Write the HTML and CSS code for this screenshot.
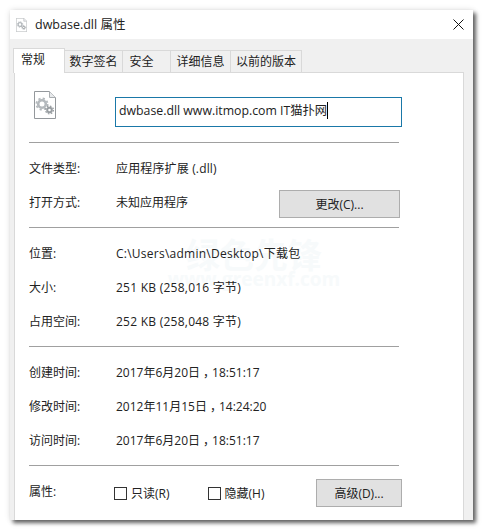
FILE: index.html
```html
<!doctype html>
<html lang="zh-CN">
<head>
	<meta charset="UTF-8">
	<title>dwbase.dll 属性</title>
	<link rel="stylesheet" href="styles.css">
</head>
<body>
	<svg class="defs" width="0" height="0">
		<symbol id="dll" viewBox="0 0 22 28">
			<path d="M.5.5H15.5L21.500 6.500V27.500H.5Z" fill="#fff" stroke="#94989c"/>
			<path d="M15.500.5V6.500H21.500" fill="#e8eaec" stroke="#a9adb0"/>
			<circle cx="8" cy="13" r="3.800" fill="none" stroke="#b4b9bd" stroke-width="2.600"/>
			<circle cx="8" cy="13" r="5.600" fill="none" stroke="#b4b9bd" stroke-width="1.800" stroke-dasharray="2.200 2.200"/>
			<circle cx="15.500" cy="19" r="2.300" fill="none" stroke="#999ea2" stroke-width="2"/>
			<circle cx="15.500" cy="19" r="3.900" fill="none" stroke="#999ea2" stroke-width="1.300" stroke-dasharray="1.600 1.450"/>
		</symbol>
	</svg>
	<div class="dialog">
		<div class="titlebar">
			<svg class="title-icon" width="11" height="14"><use href="#dll"/></svg>
			<span class="title-text">dwbase.dll 属性</span>
			<svg class="close" width="11" height="11" viewBox="0 0 11 11"><path d="M.5.5L10.500 10.500M10.500.5L.5 10.500" stroke="#111" fill="none"/></svg>
		</div>
		<div class="body">
			<ul class="tabs">
				<li class="tab tab-active">常规</li>
				<li class="tab tab-sign">数字签名</li>
				<li class="tab tab-safe">安全</li>
				<li class="tab tab-info">详细信息</li>
				<li class="tab tab-old">以前的版本</li>
			</ul>
			<div class="panel">
				<div class="watermark">
					<div class="wm-big">绿色先锋</div>
					<div class="wm-small">www.greenxf.com</div>
				</div>
				<div class="head">
					<svg class="file-icon" width="22" height="28"><use href="#dll"/></svg>
					<div class="name-box">dwbase.dll www.itmop.com IT猫扑网<span class="caret"></span></div>
				</div>
				<div class="section">
					<div class="row"><span class="label">文件类型:</span><span class="tight">应用程序扩展 (.dll)</span></div>
					<div class="row"><span class="label">打开方式:</span><span>未知应用程序</span><button class="btn btn-change">更改(C)...</button></div>
				</div>
				<div class="section">
					<div class="row"><span class="label">位置:</span><span class="wide">C:\Users\admin\Desktop\下载包</span></div>
					<div class="row"><span class="label">大小:</span><span class="wide">251 KB (258,016 字节)</span></div>
					<div class="row"><span class="label">占用空间:</span><span class="wide">252 KB (258,048 字节)</span></div>
				</div>
				<div class="section">
					<div class="row"><span class="label">创建时间:</span><span>2017年6月20日<span class="comma">，</span>18:51:17</span></div>
					<div class="row"><span class="label">修改时间:</span><span>2012年11月15日<span class="comma">，</span>14:24:20</span></div>
					<div class="row"><span class="label">访问时间:</span><span>2017年6月20日<span class="comma">，</span>18:51:17</span></div>
				</div>
				<div class="section attrs">
					<span class="label attr-label">属性:</span>
					<label class="check"><span class="box"></span>只读(R)</label>
					<label class="check check-hide"><span class="box"></span>隐藏(H)</label>
					<button class="btn btn-adv">高级(D)...</button>
				</div>
			</div>
		</div>
	</div>
</body>
</html>
```

FILE: styles.css
```css
*{
	margin: 0;
	padding: 0;
	box-sizing: border-box;
}
html,body{
	height: 100%;
	background: #fff;
}
body{
	padding: 10px;
	font-family: "Open Sans", "Noto Sans CJK SC", sans-serif;
	font-size: 12px;
	color: #222;
}
.defs{
	position: absolute;
}
.dialog{
	width: 463px;
	height: 510px;
	display: flex;
	flex-direction: column;
	background: #f0f0f0;
	box-shadow: 3px 3px 4px rgba(0,0,0,.6), 0 0 6px rgba(0,0,0,.12);
}
.titlebar{
	height: 29px;
	flex: none;
	display: flex;
	align-items: center;
	background: #fff;
	padding: 0 9px 0 6px;
}
.title-icon{
	margin-right: 8px;
}
.title-text{
	font-size: 12.500px;
	flex: 1;
	padding-bottom: 3px;
}
.close{
	margin-bottom: 1px;
}
.body{
	flex: 1;
	display: flex;
	flex-direction: column;
	padding: 9px 0 0 4px;
}
.tabs{
	list-style: none;
	display: flex;
	height: 24px;
	align-items: flex-end;
	margin-left: -1px;
}
.tab{
	height: 22px;
	line-height: 22px;
	text-align: center;
	border: 1px solid #d9d9d9;
	border-bottom: 0;
	border-left: 0;
	background: #f0f0f0;
}
.tab-active{
	height: 25px;
	width: 52px;
	margin-bottom: -1px;
	padding-right: 12px;
	background: #fff;
	border-left: 1px solid #d9d9d9;
	position: relative;
	z-index: 1;
	line-height: 22px;
}
.tab-sign{ width: 58px; }
.tab-safe{ width: 48px; padding-right: 10px; }
.tab-info{ width: 60px; }
.tab-old{ width: 71px; }
.panel{
	width: 450px;
	flex: 1;
	background: #fff;
	border: 1px solid #d9d9d9;
	border-bottom: 0;
	padding: 24px 0 0 14px;
	position: relative;
}
.head{
	display: flex;
	height: 30px;
	margin-bottom: 15px;
}
.file-icon{
	margin: -6px 0 0 5px;
}
.name-box{
	width: 287px;
	height: 30px;
	margin-left: 59px;
	border: 1px solid #1a78a8;
	padding-left: 3px;
	font-size: 12.300px;
	line-height: 22px;
	padding-top: 2px;
	white-space: nowrap;
}
.caret{
	display: inline-block;
	width: 1px;
	height: 17px;
	background: #000;
	vertical-align: -4px;
}
.section{
	width: 370px;
	border-top: 1px solid #a0a0a0;
	padding: 8px 0;
	position: relative;
}
.row{
	display: flex;
	align-items: center;
	height: 34px;
}
.label{
	width: 87px;
	flex: none;
}
.wide{
	letter-spacing: .25px;
}
.tight{
	letter-spacing: .15px;
}
.comma{
	padding-left: 3px;
	margin-right: -3px;
}
.btn{
	font: inherit;
	color: #222;
	background: #e1e1e1;
	border: 1px solid #adadad;
	height: 28px;
}
.btn-change{
	width: 121px;
	margin-left: auto;
	margin-top: 4px;
	margin-right: -1px;
}
.attrs{
	display: flex;
	align-items: flex-start;
	padding: 13px 0 0;
	height: 50px;
}
.attr-label{
	width: 85px;
	margin-top: 3px;
}
.check{
	display: flex;
	align-items: center;
	height: 28px;
	margin-top: -1px;
	padding-top: 2px;
}
.check-hide{
	margin-left: 38px;
}
.box{
	width: 13px;
	height: 13px;
	border: 1px solid #333;
	background: #fff;
	margin-right: 4px;
}
.btn-adv{
	width: 86px;
	margin-left: auto;
	margin-right: -3px;
}
.watermark{
	position: absolute;
	left: 151px;
	top: 166px;
	width: 176px;
	text-align: center;
	color: #f7fafb;
	white-space: nowrap;
}
.wm-big{
	font-size: 34px;
	font-weight: 700;
	line-height: 33px;
}
.wm-small{
	font-size: 19px;
	font-weight: 700;
	line-height: 14px;
}
```
